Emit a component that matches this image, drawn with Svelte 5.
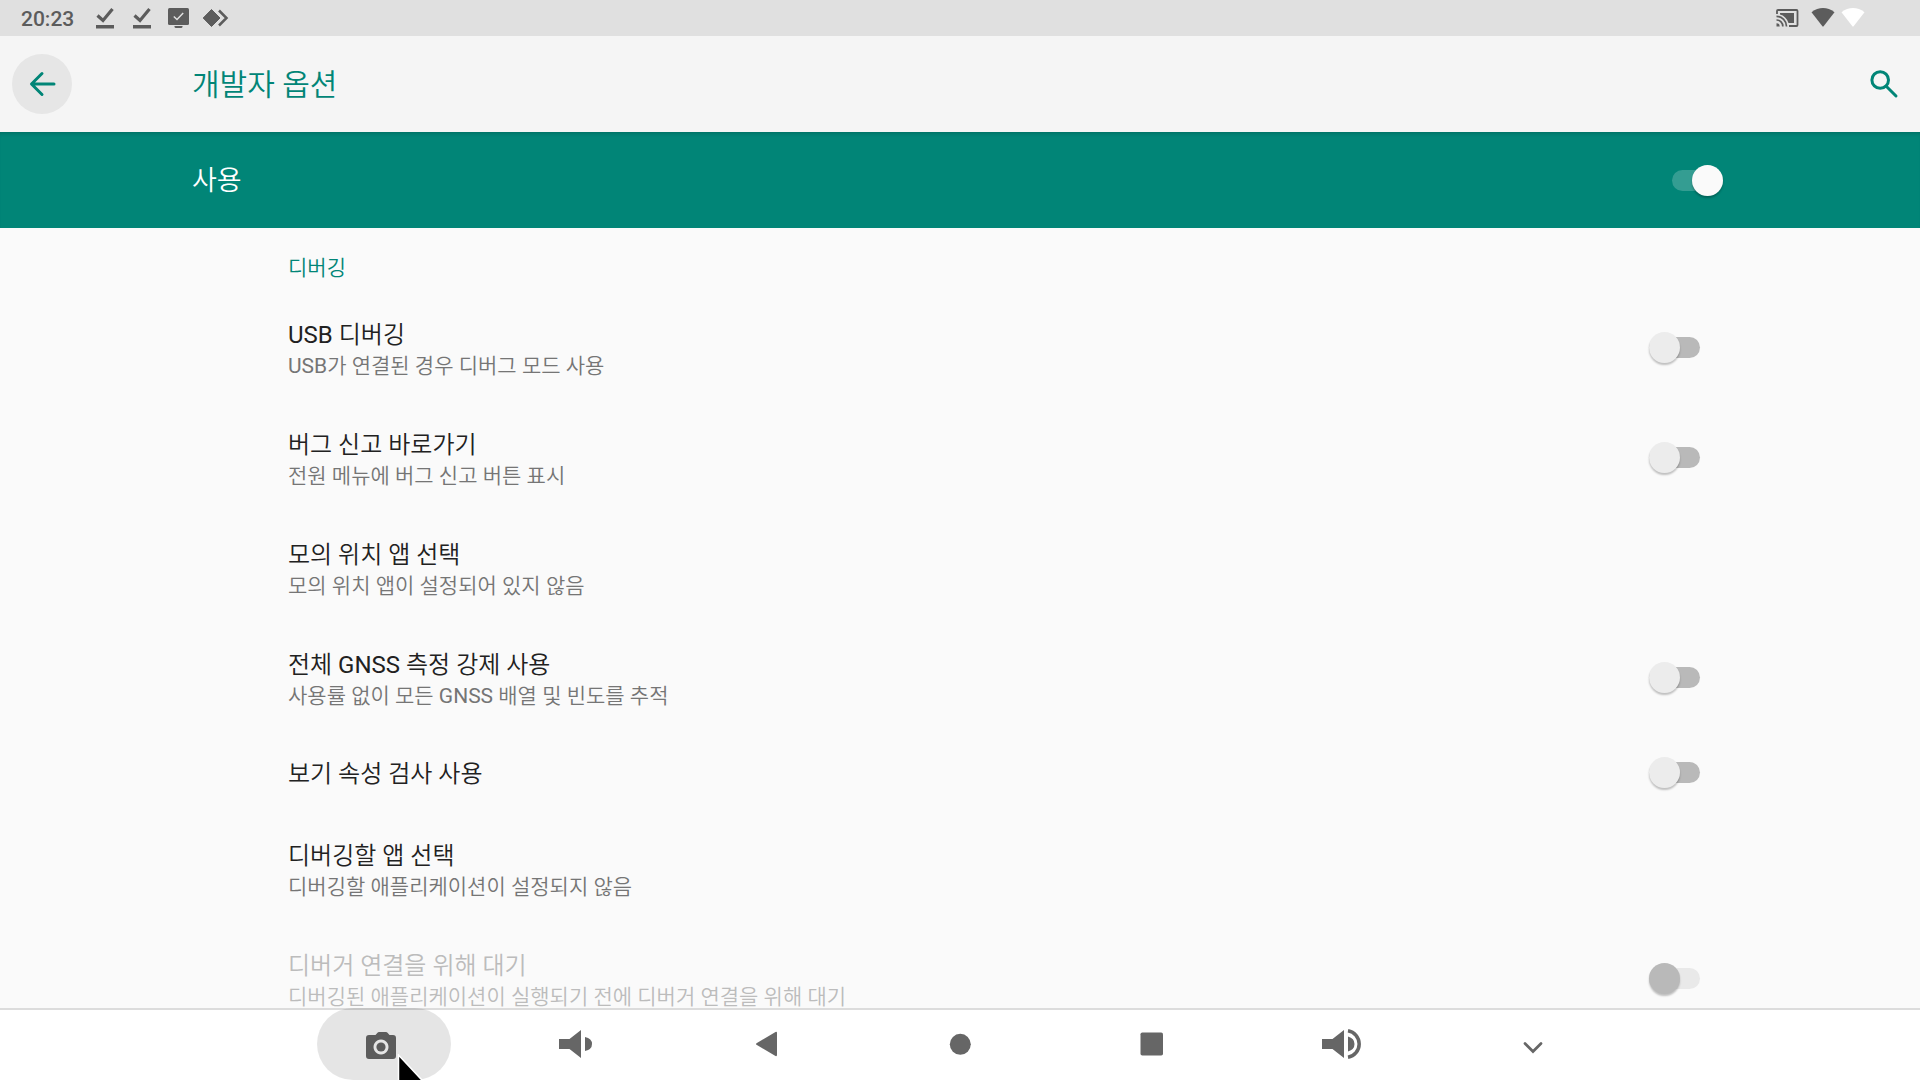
<script lang="ts">
  type Option = { id: string; title: string; note?: string; toggle?: boolean; disabled?: boolean };

  const options: Option[] = [
    { id: 'usb', title: 'USB 디버깅', note: 'USB가 연결된 경우 디버그 모드 사용', toggle: true },
    { id: 'bug', title: '버그 신고 바로가기', note: '전원 메뉴에 버그 신고 버튼 표시', toggle: true },
    { id: 'mock', title: '모의 위치 앱 선택', note: '모의 위치 앱이 설정되어 있지 않음' },
    { id: 'gnss', title: '전체 GNSS 측정 강제 사용', note: '사용률 없이 모든 GNSS 배열 및 빈도를 추적', toggle: true },
    { id: 'inspect', title: '보기 속성 검사 사용', toggle: true },
    { id: 'app', title: '디버깅할 앱 선택', note: '디버깅할 애플리케이션이 설정되지 않음' },
    { id: 'wait', title: '디버거 연결을 위해 대기', note: '디버깅된 애플리케이션이 실행되기 전에 디버거 연결을 위해 대기', toggle: true, disabled: true }
  ];

  let enabled = $state(true);
</script>

<div class="screen">
  <div class="status">
    <time>20:23</time>
    {#each [0, 1] as n (n)}
      <svg class="note-icon" viewBox="0 0 37 36" aria-hidden="true">
        <path d="M10.5 15.5l5.5 5L25.500 9" fill="none" stroke="currentColor" stroke-width="3.200" />
        <rect x="9" y="25" width="18" height="3.500" fill="currentColor" />
      </svg>
    {/each}
    <svg class="note-icon" viewBox="0 0 37 36" aria-hidden="true">
      <rect x="7" y="8" width="21" height="17" rx="1.500" fill="currentColor" />
      <path d="M13.500 26h8v.5q0 1.500-1.500 1.500h-5q-1.500 0-1.500-1.500z" fill="currentColor" />
      <path d="M12.800 16.500l3.200 3 6.200-6.500" fill="none" stroke="#e0e0e0" stroke-width="1.500" />
    </svg>
    <svg class="note-icon" viewBox="0 0 37 36" aria-hidden="true">
      <path d="M13.500 9.500l8.500 8.500-8.500 8.500L5.200 18z" fill="currentColor" stroke="currentColor" stroke-linejoin="round" />
      <path d="M21 10.500l7.500 7.500-7.500 7.500" fill="none" stroke="currentColor" stroke-width="2.500" />
    </svg>
    <svg class="cast" viewBox="0 0 36 36" aria-hidden="true">
      <path d="M8 14v-3q0-1 1-1h18.500q1 0 1 1v14q0 1-1 1H20" fill="none" stroke="currentColor" stroke-width="1.800" />
      <path d="M11 13h14v10h-5.500Q17 16 11 14.500z" fill="currentColor" />
      <path d="M7.500 16.300A10 10 0 0 1 17.500 26.500M7.500 20A6.300 6.300 0 0 1 13.800 26.500" fill="none" stroke="currentColor" stroke-width="1.700" />
      <path d="M7.500 23.200a3.200 3.200 0 0 1 3.200 3.300H7.500z" fill="currentColor" />
    </svg>
    <svg class="wifi" viewBox="0 0 30 36" aria-hidden="true">
      <path d="M3.500 12.200Q9 8 15 8t11.500 4.200L15.800 26q-.8 1-1.600 0z" fill="currentColor" />
    </svg>
    <svg class="wifi faint" viewBox="0 0 30 36" aria-hidden="true">
      <path d="M3.500 12.200Q9 8 15 8t11.500 4.200L15.800 26q-.8 1-1.600 0z" fill="currentColor" />
    </svg>
  </div>

  <header class="appbar">
    <button class="round back" aria-label="뒤로">
      <svg viewBox="0 0 36 36" aria-hidden="true">
        <path d="M30 18H8M18 7.500L7.500 18 18 28.500" fill="none" stroke="currentColor" stroke-width="3" stroke-linecap="round" stroke-linejoin="round" />
      </svg>
    </button>
    <h1>개발자 옵션</h1>
    <button class="round" aria-label="검색">
      <svg viewBox="0 0 36 36" aria-hidden="true">
        <circle cx="14.200" cy="14" r="8.300" fill="none" stroke="currentColor" stroke-width="3" />
        <path d="M20.500 20.500l9.500 9.500" stroke="currentColor" stroke-width="3" stroke-linecap="round" />
      </svg>
    </button>
  </header>

  <div class="master">
    <label for="master">사용</label>
    <input id="master" class="switch" type="checkbox" role="switch" bind:checked={enabled} />
  </div>

  <main>
    <h2>디버깅</h2>
    <ul>
      {#each options as o (o.id)}
        <li class:disabled={o.disabled}>
          {#if o.toggle}
            <label class="text" for={o.id}>
              <span class="title">{o.title}</span>
              {#if o.note}<span class="note">{o.note}</span>{/if}
            </label>
            <input id={o.id} class="switch" type="checkbox" role="switch" disabled={o.disabled} />
          {:else}
            <button class="text">
              <span class="title">{o.title}</span>
              {#if o.note}<span class="note">{o.note}</span>{/if}
            </button>
          {/if}
        </li>
      {/each}
    </ul>
  </main>

  <nav>
    <button class="pressed" aria-label="스크린샷">
      <svg viewBox="0 0 72 72" aria-hidden="true">
        <path fill-rule="evenodd" fill="currentColor" d="M24 27h3.500l2-2.200q.6-.8 1.500-.8h7q.9 0 1.500.8l2 2.200H45q3 0 3 3v18q0 3-3 3H21q-3 0-3-3V30q0-3 3-3zM33 31.500a7.500 7.500 0 1 0 .01 0z" />
        <circle cx="33" cy="39" r="4.600" fill="currentColor" />
      </svg>
      <svg class="cursor" viewBox="0 0 26 26" aria-hidden="true">
        <path d="M2.500 1v30h28z" fill="#000" stroke="#fff" stroke-width="1.500" />
      </svg>
    </button>
    <button aria-label="볼륨 낮추기">
      <svg viewBox="0 0 72 72" aria-hidden="true">
        <path fill="currentColor" d="M19 31h10.500L41 22v28l-11.500-9H19zM45 29q7 1.500 7 7t-7 7z" />
      </svg>
    </button>
    <button aria-label="이전">
      <svg viewBox="0 0 72 72" aria-hidden="true">
        <path fill="currentColor" d="M24.500 35.200L43.500 24q1.500-.6 1.500 1v22q0 1.600-1.500 1L24.500 36.800q-1-.8 0-1.600z" />
      </svg>
    </button>
    <button aria-label="홈">
      <svg viewBox="0 0 72 72" aria-hidden="true"><circle cx="36.300" cy="36.300" r="10.500" fill="currentColor" /></svg>
    </button>
    <button aria-label="최근 앱">
      <svg viewBox="0 0 72 72" aria-hidden="true"><rect x="24.500" y="24.500" width="22.500" height="23" rx="1.800" fill="currentColor" /></svg>
    </button>
    <button aria-label="볼륨 높이기">
      <svg viewBox="0 0 72 72" aria-hidden="true">
        <path fill="currentColor" d="M14 31h10.500L36 22v28l-11.500-9H14zM40 28.500q6.500 1.800 6.500 7.500T40 43.500z" />
        <path d="M40 22.700a13.500 13.500 0 0 1 0 26.600" fill="none" stroke="currentColor" stroke-width="3.500" />
      </svg>
    </button>
    <button aria-label="탐색 메뉴 숨기기">
      <svg viewBox="0 0 72 72" aria-hidden="true">
        <path d="M25 35.500l8 8 8-8" fill="none" stroke="currentColor" stroke-width="2.700" stroke-linecap="round" />
      </svg>
    </button>
  </nav>
</div>

<style>
  :global(body) {
    margin: 0;
  }
  .screen {
    display: flex;
    flex-direction: column;
    height: 100vh;
    overflow: hidden;
    background: #fafafa;
    color: #212121;
    font-family: Roboto, 'Noto Sans CJK KR DemiLight', 'Noto Sans CJK KR', sans-serif;
    font-size: 24px;
  }
  button {
    border: 0;
    padding: 0;
    background: none;
    color: inherit;
    font: inherit;
    text-align: left;
  }
  svg {
    display: block;
    flex: none;
  }
  .status {
    flex: none;
    display: flex;
    align-items: center;
    height: 36px;
    padding: 0 52px 0 21px;
    background: #e0e0e0;
    color: #5c5c5c;
  }
  time {
    width: 66px;
    padding-top: 2px;
    font-size: 21px;
    line-height: 32px;
    font-weight: 500;
  }
  .note-icon {
    width: 37px;
    height: 36px;
  }
  .cast {
    width: 36px;
    height: 36px;
    margin-left: auto;
    margin-right: 3px;
  }
  .wifi {
    width: 30px;
    height: 36px;
  }
  .faint {
    color: #fff;
  }
  .appbar {
    flex: none;
    display: flex;
    align-items: center;
    height: 96px;
    padding: 0 6px 0 12px;
    background: #f5f5f5;
    color: #018577;
  }
  .round {
    display: grid;
    place-items: center;
    width: 60px;
    height: 60px;
    border-radius: 50%;
  }
  .round svg {
    width: 36px;
    height: 36px;
  }
  .back {
    background: #e6e6e6;
  }
  h1 {
    flex: 1;
    margin: 0 0 0 120px;
    padding-top: 2px;
    font-size: 30px;
    line-height: 40px;
    font-weight: 400;
  }
  .master {
    flex: none;
    display: flex;
    align-items: center;
    justify-content: space-between;
    height: 96px;
    padding: 0 197px 0 192px;
    background: #018577;
    box-shadow: inset 0 4px 4px -3px rgba(0, 0, 0, 0.2);
    color: #fff;
    font-size: 27px;
  }
  .master label {
    padding-top: 2px;
    line-height: 40px;
  }
  main {
    flex: 1;
    min-height: 0;
    overflow: hidden;
    padding: 0 220px 0 288px;
  }
  h2 {
    margin: 0;
    padding: 24px 0 8px;
    color: #018577;
    font-size: 21px;
    line-height: 32px;
    font-weight: 400;
  }
  ul {
    list-style: none;
    margin: 0;
    padding: 0;
  }
  li {
    display: flex;
    align-items: center;
  }
  .text {
    flex: 1;
    display: flex;
    flex-direction: column;
    padding: 26px 0 22px;
  }
  .title {
    line-height: 34px;
  }
  .title:only-child {
    line-height: 33px;
  }
  .note {
    color: #757575;
    font-size: 21px;
    line-height: 28px;
  }
  .disabled .title,
  .disabled .note {
    color: #bcbcbc;
  }
  .switch {
    appearance: none;
    flex: none;
    display: flex;
    align-items: center;
    width: 51px;
    height: 21px;
    margin: 0;
    border-radius: 11px;
    background: #b9b9b9;
  }
  .switch::before {
    content: '';
    flex: none;
    width: 31px;
    height: 31px;
    border-radius: 50%;
    background: #ececec;
    box-shadow: 0 2px 2px rgba(0, 0, 0, 0.24);
  }
  .switch:checked {
    justify-content: flex-end;
    background: #349d92;
  }
  .switch:checked::before {
    background: #fafafa;
  }
  .switch:disabled {
    background: #e9e9e9;
  }
  .switch:disabled::before {
    background: #b9b9b9;
  }
  nav {
    flex: none;
    display: grid;
    grid-template-columns: repeat(7, 1fr);
    justify-items: center;
    padding: 0 15%;
    background: linear-gradient(#dcdcdc 2px, #fff 2px);
    color: #666;
  }
  nav button {
    position: relative;
    display: grid;
    place-items: center;
    width: 134px;
    height: 72px;
    border-radius: 36px;
  }
  nav svg {
    width: 72px;
    height: 72px;
  }
  .pressed {
    background: rgba(0, 0, 0, 0.1);
    color: #5c5c5c;
  }
  nav .cursor {
    position: absolute;
    left: 79px;
    bottom: 0;
    width: 26px;
    height: 26px;
  }
</style>
